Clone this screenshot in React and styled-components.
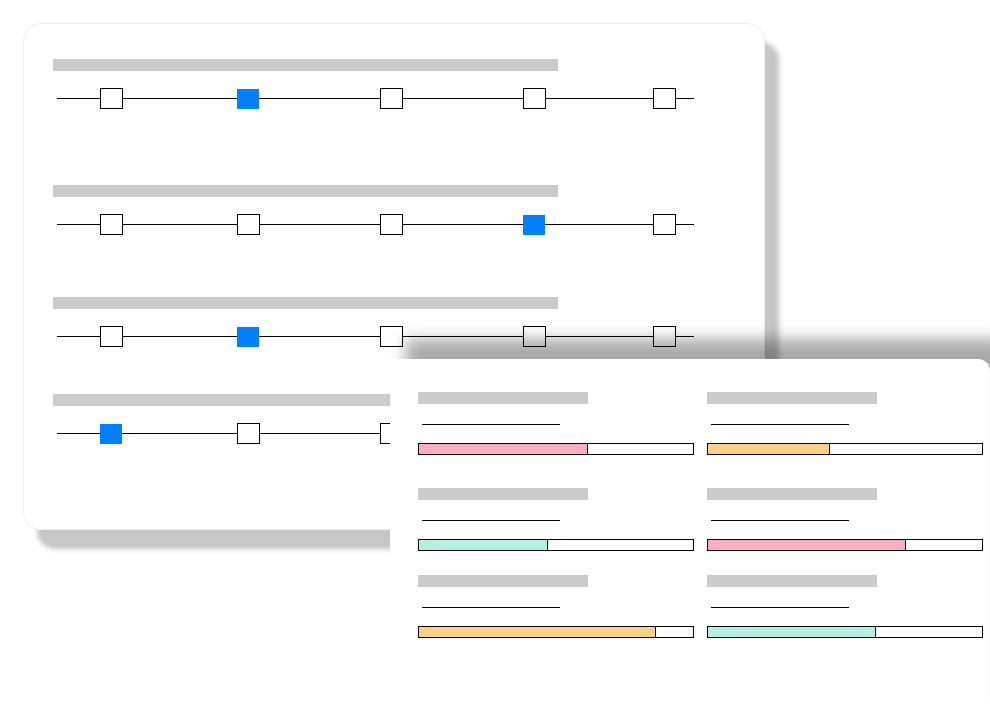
import React, { useState } from "react";
import styled, { createGlobalStyle } from "styled-components";

const GlobalStyle = createGlobalStyle`
  *, *::before, *::after { box-sizing: border-box; }
  body {
    margin: 0;
    background: #fff;
    font-family: "Liberation Sans", Arial, sans-serif;
    overflow-x: hidden;
  }
`;

/* The two cards share the third column and third row, where they overlap. */
const Stage = styled.main`
  display: grid;
  grid-template-columns: 23px minmax(0, 367fr) minmax(0, 375fr) minmax(0, 225fr);
  grid-template-rows: 23px 336px auto 1fr;
  min-height: 100vh;
`;

const SurveyCard = styled.form`
  grid-area: 2 / 2 / 4 / 4;
  display: grid;
  grid-template-rows: 126px 112px 97px auto;
  align-content: start;
  padding: 35px 70px 85px 29px;
  background: #fff;
  border: 1px solid #eee;
  border-radius: 18px;
  box-shadow: 14px 19px 5px #c6c6c6;
`;

const ResultsCard = styled.section`
  grid-area: 3 / 3 / 5 / 5;
  align-self: start;
  display: grid;
  grid-template-columns: repeat(2, minmax(0, 1fr));
  grid-template-rows: 96px 87px auto;
  column-gap: 13px;
  padding: 33px 6px 66px 28px;
  background: #fff;
  border-right: 1px solid #f8f8f8;
  border-radius: 0 12px 12px 0;
  box-shadow: 16px -20px 16px rgba(0, 0, 0, 0.34);
`;

const Question = styled.fieldset`
  min-width: 0;
  margin: 0;
  padding: 0;
  border: 0;
`;

const TitleBar = styled.div`
  width: 100%;
  max-width: ${({ $width }) => $width}px;
  height: 12px;
  background: #cbcbcb;
`;

const Scale = styled.div`
  display: grid;
  grid-template-columns: 43fr 137fr 143fr 143fr 130fr 41fr;
  align-items: end;
  height: 21px;
  margin: 17px 0 0 4px;
  background: linear-gradient(#000, #000) center / 100% 1px no-repeat;

  &::before {
    content: "";
  }
`;

const Choice = styled.input`
  appearance: none;
  width: 23px;
  height: 21px;
  margin: 0;
  background: transparent;
  background: #fff;
  border: 1px solid #000;
  border-radius: 0;
  cursor: pointer;

  &:checked {
    width: 22px;
    height: 20px;
    background: #0080ff;
    border-color: #0080ff;
  }
`;

const Result = styled.article`
  min-width: 0;
`;

const Subtitle = styled.div`
  width: 50%;
  height: 1px;
  margin: 20px 0 18px 4px;
  background: #000;
`;

const Track = styled.div`
  height: 12px;
  background: #fff;
  border: 1px solid #000;
`;

const Fill = styled.div`
  height: 100%;
  background: ${({ $color }) => $color};
  border-right: 1px solid #000;
`;

const PINK = "#f9adc3";
const YELLOW = "#fed182";
const MINT = "#b3f0e1";

const initialAnswers = [1, 3, 1, 0];

const results = [
  { value: 61.6, color: PINK },
  { value: 44.5, color: YELLOW },
  { value: 47, color: MINT },
  { value: 72.3, color: PINK },
  { value: 86.5, color: YELLOW },
  { value: 61.3, color: MINT },
];

export default function App() {
  const [answers, setAnswers] = useState(initialAnswers);

  const choose = (question, option) =>
    setAnswers((prev) => prev.map((a, i) => (i === question ? option : a)));

  return (
    <>
      <GlobalStyle />
      <Stage>
        <SurveyCard aria-label="Survey">
          {answers.map((answer, question) => (
            <Question key={question} aria-label={`Question ${question + 1}`}>
              <TitleBar $width={505} />
              <Scale>
                {[0, 1, 2, 3, 4].map((option) => (
                  <Choice
                    key={option}
                    type="radio"
                    name={`question-${question}`}
                    aria-label={`Option ${option + 1}`}
                    checked={answer === option}
                    onChange={() => choose(question, option)}
                  />
                ))}
              </Scale>
            </Question>
          ))}
        </SurveyCard>
        <ResultsCard aria-label="Results">
          {results.map(({ value, color }, i) => (
            <Result key={i}>
              <TitleBar $width={170} />
              <Subtitle />
              <Track
                role="meter"
                aria-label={`Result ${i + 1}`}
                aria-valuemin={0}
                aria-valuemax={100}
                aria-valuenow={value}
              >
                <Fill $color={color} style={{ width: `${value}%` }} />
              </Track>
            </Result>
          ))}
        </ResultsCard>
      </Stage>
    </>
  );
}
